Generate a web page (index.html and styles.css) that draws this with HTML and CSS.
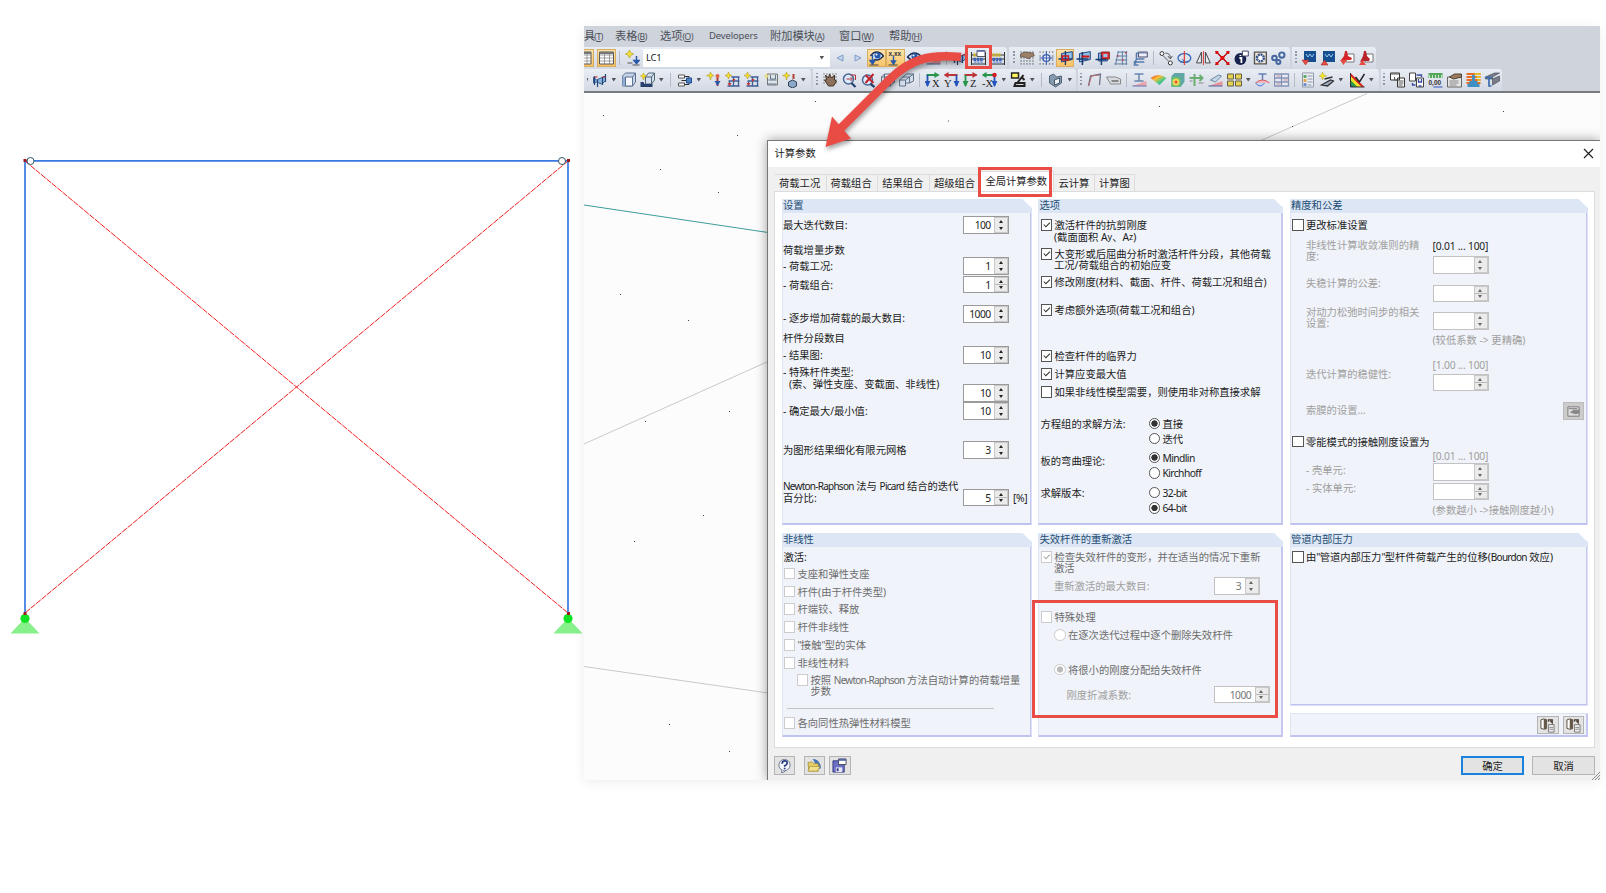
FILE: index.html
```html
<!DOCTYPE html>
<html lang="zh-CN">
<head>
<meta charset="utf-8">
<title>计算参数</title>
<link rel="stylesheet" href="styles.css">
</head>
<body>
<svg class="defs" aria-hidden="true">
  <defs>
    <linearGradient id="rainbow" x2="1" y2="1"><stop offset="0" stop-color="#d33"/><stop offset=".35" stop-color="#fb3"/><stop offset=".65" stop-color="#4c8"/><stop offset="1" stop-color="#36c"/></linearGradient>
    <symbol id="table" viewBox="0 0 16 16"><path d="M1 2h14v12H1z" fill="#fff" stroke="#555"/><path d="M1 5h14M1 8h14M1 11h14M6 3v11M11 3v11" stroke="#888" stroke-width=".8"/><path d="M1 2h14v2H1z" fill="#777"/></symbol>
    <symbol id="load" viewBox="0 0 16 16"><path d="M5 0l1.300 2.700 2.700 1.300-2.700 1.300L5 8 3.700 5.300 1 4l2.700-1.300z" fill="#f5e340" stroke="#a99400" stroke-width=".6"/><path d="M12 6v7M9.500 10.500l2.500 3 2.500-3z" stroke="#2958a8" stroke-width="1.500" fill="#2958a8"/><path d="M3 13h5M8 15h7" stroke="#555"/></symbol>
    <symbol id="eye" viewBox="0 0 16 16"><path d="M1 7q7-8 14 0-7 7-14 0z" fill="#dce9fb" stroke="#1b2d55" stroke-width="1.500"/><circle cx="8" cy="6.500" r="3" fill="#2459ad"/><circle cx="7" cy="5.500" r="1" fill="#fff"/></symbol>
    <symbol id="eye-load" viewBox="0 0 16 16"><path d="M2 6q6-8 13 0-6 6-9 3" fill="#dce9fb" stroke="#1b2d55" stroke-width="1.500"/><circle cx="9" cy="5.500" r="3" fill="#2459ad"/><circle cx="8" cy="4.500" r="1" fill="#fff"/><path d="M4 5v8M1.500 10.500L4 14l2.500-3.500z" stroke="#2459ad" fill="#2459ad" stroke-width="1.400"/><path d="M1 15h9" stroke="#444"/></symbol>
    <symbol id="xxx" viewBox="0 0 16 16"><text x="1" y="5.500" class="mini">x.xx</text><path d="M6 6v7M4 11l2 3 2-3z" stroke="#2459ad" stroke-width="1.400" fill="#2459ad"/><path d="M1 15h9" stroke="#444"/></symbol>
    <symbol id="abacus" viewBox="0 0 16 16"><path d="M1 2v13M15 2v13M1 5h14M1 9h14M1 14h14" stroke="#333"/><path d="M3 5h9" stroke="#d3b529" stroke-width="3.500" stroke-dasharray="2 1"/><path d="M3 9.500h10" stroke="#3d63b4" stroke-width="3.500" stroke-dasharray="2.500 .8"/><path d="M4 12.500h9" stroke="#7a97cf" stroke-width="2" stroke-dasharray="2 1"/></symbol>
    <symbol id="abacus-form" viewBox="0 0 16 16"><path d="M1 2v13M15 2v13M1 5h14M1 9h14M1 14h14" stroke="#333"/><path d="M3 5h9" stroke="#d3b529" stroke-width="3.500" stroke-dasharray="2 1"/><path d="M3 9.500h10" stroke="#3d63b4" stroke-width="3.500" stroke-dasharray="2.500 .8"/><path d="M4 12.500h9" stroke="#7a97cf" stroke-width="2" stroke-dasharray="2 1"/><path d="M6.500 .5h8v6h-8z" fill="#fff" stroke="#556"/><path d="M6.500 .5h8V2h-8z" fill="#7583b8"/></symbol>
    <symbol id="gridhand" viewBox="0 0 16 16"><path d="M1 2h14M1 5h14M1 8h14M1 11h14M1 14h14" stroke="#333" stroke-dasharray="1.200 1.800"/><path d="M1 4l4-2 9 1 1 3-4 1-1 2-5-2-4 0z" fill="#9b8067" stroke="#4c3b2e" stroke-width=".6"/></symbol>
    <symbol id="snap" viewBox="0 0 16 16"><path d="M1 2h14M1 6h14M1 10h14M1 14h14" stroke="#444" stroke-dasharray="1.200 2"/><circle cx="8" cy="8" r="3.500" fill="#e8eefb" stroke="#3a5daf" stroke-width="1.300"/><path d="M8 1v14M1 8h14" stroke="#3a5daf"/></symbol>
    <symbol id="plane" viewBox="0 0 16 16"><path d="M4 3.500l11-2v8L4 12z" fill="#8fc0e8" stroke="#23467c"/><path d="M8 1v14M1 9h14" stroke="#1a3b73" stroke-width="1.400"/><path d="M5 6h6v4H5z" fill="none" stroke="#d21717" stroke-width="1.500"/></symbol>
    <symbol id="plane-line" viewBox="0 0 16 16"><path d="M4 3.500l11-2v8L4 12z" fill="#8fc0e8" stroke="#23467c"/><path d="M7 2v13M1 9h12" stroke="#1a3b73" stroke-width="1.600"/><path d="M6 6.500h8" stroke="#d21717" stroke-width="2"/></symbol>
    <symbol id="plane-red" viewBox="0 0 16 16"><path d="M4 3h9v8H4z" fill="#8fb7de" stroke="#23467c"/><path d="M7 2h8v7H7z" fill="#e23b3b" stroke="#821717"/><path d="M9 4h4v3H9z" fill="#9cc3e8"/><path d="M7 5v10M1 9.500h11" stroke="#1a3b73" stroke-width="1.500"/></symbol>
    <symbol id="mesh" viewBox="0 0 16 16"><path d="M4 2h10M3 6h11M2 10h12M1 14h13M5 1L2 15M9 1v14M13 1v14" stroke="#5d7da3"/><path d="M4 6h1M9 10h1M12 3h1" stroke="#d33" stroke-width="2"/></symbol>
    <symbol id="axis" viewBox="0 0 16 16"><path d="M6 2h9v5H6z" fill="#eef" stroke="#446"/><path d="M4 3h2M4 3v6h8M4 9l-2 5 2-2 8 0M2 11v4h4" stroke="#5a7cad" stroke-width="1.500" fill="none"/><path d="M6 2h9v1.500H6z" fill="#7482a8"/></symbol>
    <symbol id="copy" viewBox="0 0 16 16"><circle cx="3.500" cy="3.500" r="2" fill="#fff" stroke="#333"/><circle cx="12" cy="13" r="2" fill="#fff" stroke="#333"/><path d="M7 3q5 0 5 5M9.500 6l2.500 3 2-3M5 6l5 5" stroke="#555" fill="none"/></symbol>
    <symbol id="rotate" viewBox="0 0 16 16"><ellipse cx="8" cy="8" rx="6.500" ry="4.500" stroke="#3568b5" stroke-width="1.300" fill="none"/><path d="M4 12l4 0-2-3M12 12l-4 0" stroke="#3568b5" fill="none"/><path d="M8 1v14" stroke="#d44" stroke-width="1.300"/></symbol>
    <symbol id="mirror" viewBox="0 0 16 16"><path d="M6 2v11H1zM10 2v11h5z" fill="#e9edf4" stroke="#444"/><path d="M8 1v14" stroke="#d33"/></symbol>
    <symbol id="cross" viewBox="0 0 16 16"><path d="M1 1l14 14M15 1L1 15" stroke="#333" stroke-width="1.300"/><path d="M1 1h3v3H1zM12 1h3v3h-3zM1 12h3v3H1zM12 12h3v3h-3z" fill="#d11"/><path d="M4 4l3 3M12 4L9 7M4 12l3-3M12 12L9 9" stroke="#d11" stroke-width="1.200"/><path d="M6 6h4v4H6z" fill="#d11"/></symbol>
    <symbol id="info" viewBox="0 0 16 16"><circle cx="7" cy="9" r="6" fill="#17224e"/><path d="M6 8h2v5M7 5v1" stroke="#fff" stroke-width="1.800" fill="none"/><path d="M9 1h6v5H9z" fill="#fff" stroke="#446"/></symbol>
    <symbol id="gearbox" viewBox="0 0 16 16"><path d="M2 2h12v12H2z" fill="#f4ead8" stroke="#555" stroke-width="1.400"/><circle cx="8" cy="8" r="3.500" fill="#fff" stroke="#3a568d" stroke-width="2.500" stroke-dasharray="2 .7"/></symbol>
    <symbol id="gears" viewBox="0 0 16 16"><g fill="#dce6f7" stroke="#45659f" stroke-width="2"><circle cx="4" cy="8" r="2.300"/><circle cx="8" cy="12" r="2"/><circle cx="11.500" cy="5" r="2.700"/></g></symbol>
    <symbol id="pic-down" viewBox="0 0 16 16"><path d="M3 1h12v11H3z" fill="#164f90"/><path d="M5 4l2 3 2-3 2 3 2-3" stroke="#9bc8ef" fill="none"/><path d="M1 10h7l-3.500 5z" fill="#e44b43" stroke="#a32720" stroke-width=".5"/></symbol>
    <symbol id="pic-up" viewBox="0 0 16 16"><path d="M3 1h12v11H3z" fill="#164f90"/><path d="M5 4l2 3 2-3 2 3 2-3" stroke="#9bc8ef" fill="none"/><path d="M1 15h7l-3.500-5z" fill="#e44b43" stroke="#a32720" stroke-width=".5"/></symbol>
    <symbol id="pdf-down" viewBox="0 0 16 16"><path d="M7 4h8v8H7z" fill="#fff" stroke="#777"/><path d="M6 1l2 0 1 5 4 2-1 2-5 0-3 3-2-3 3-4z" fill="#d3262b"/><path d="M1 10h7l-3.500 5z" fill="#e44b43"/></symbol>
    <symbol id="pdf-up" viewBox="0 0 16 16"><path d="M7 4h8v8H7z" fill="#fff" stroke="#777"/><path d="M6 1l2 0 1 5 3 3-1 2-5 0-4 1 3-6z" fill="#b8242a"/><path d="M1 15h7l-3.500-5z" fill="#e44b43"/></symbol>
    <symbol id="frame" viewBox="0 0 16 16"><path d="M2 5l3 3 9-4v5l-4 3-5-2-3 1z" fill="#8db4dc" stroke="#345d92"/><path d="M3 4v9M6 8v7M11 5v8M14 2v8" stroke="#23467c" stroke-width="1.200"/><path d="M3 5h3M11 5h3" stroke="#c22"/></symbol>
    <symbol id="cube" viewBox="0 0 16 16"><path d="M2 4l3-3h10v9l-3 4H2z" fill="#c6d5e9" stroke="#5d7391"/><path d="M2 5h3v9H2z" fill="#8faed2"/><path d="M5 5h7v9H5zM12 5l3-4" stroke="#5d7391" fill="#f4f7fb"/></symbol>
    <symbol id="wire" viewBox="0 0 16 16"><path d="M2 5h9v9H2zM5 2h10v8l-4 4M2 5l3-3M11 5l4-3M5 2v8h10" fill="none" stroke="#5e6e86"/></symbol>
    <symbol id="wires" viewBox="0 0 16 16"><path d="M1 8h6v6H1zM4 5h7v6H7M8 2h7v7l-4 2M1 8l7-6M7 8l8-6" fill="#d3deed" stroke="#61728b"/></symbol>
    <symbol id="opencube" viewBox="0 0 16 16"><path d="M6 5l3-4h6v7l-3 4H6z" fill="#d6e2f1" stroke="#567"/><path d="M6 5h6v7M12 5l3-4" fill="none" stroke="#567"/><path d="M1 10h3l1 2h8v3H1z" fill="#263f6d"/><path d="M4 1l1 2 2 1-2 1-1 3-1-3-2-1 2-1z" fill="#f7df2e" stroke="#a69017" stroke-width=".5"/></symbol>
    <symbol id="tree" viewBox="0 0 16 16"><path d="M2 3h6v3H2zM2 11h6v3H2z" fill="#fff" stroke="#555"/><path d="M8 4.500h4.500V8M8 12.500h4.500V8M5 8.500h5" stroke="#333" fill="none"/><path d="M10 6h5v5h-5z" fill="#4d80c4" stroke="#234f90"/></symbol>
    <symbol id="bridge" viewBox="0 0 16 16"><path d="M4 0l1 2.500 2.500 1L5 4.500 4 7 3 4.500 .5 3.500 3 2.500z" fill="#f7df2e" stroke="#a69017" stroke-width=".5"/><path d="M7 5h8M4 9h11M5 9v5M9 5v9M14 5v9M3 14h12" stroke="#3f5e94" stroke-width="1.300"/><path d="M3 11l2 3 2-3M8 7l1 3 2-3" fill="#c33"/></symbol>
    <symbol id="arrow-red" viewBox="0 0 16 16"><path d="M5 0l1 2.500 2.500 1L6 4.500 5 8 4 4.500 1 3.500 4 2.500z" fill="#f7df2e" stroke="#a69017" stroke-width=".5"/><path d="M12 4v10" stroke="#b34132" stroke-width="2"/><path d="M9 9h6l-3 5z" fill="#2958a8"/><circle cx="12" cy="4" r="2" fill="#d86447"/></symbol>
    <symbol id="disk" viewBox="0 0 16 16"><path d="M5 2h10v11H5z" fill="#dce5e9" stroke="#777"/><path d="M6 8h8M8 3v4h5V3M5 12h9" stroke="#678" fill="none"/><path d="M4 1l1 2 2 1-2 1-1 3-1-3-2-1 2-1z" fill="#e5de88"/></symbol>
    <symbol id="loadbox" viewBox="0 0 16 16"><path d="M5 0l1 2.500 2.500 1L6 4.500 5 8 4 4.500 1 3.500 4 2.500z" fill="#f7df2e" stroke="#a69017" stroke-width=".5"/><path d="M12 2v5" stroke="#b34132" stroke-width="2"/><path d="M7 10l4-2 4 2v4l-4 2-4-2z" fill="#8aa9ca" stroke="#345"/></symbol>
    <symbol id="hand" viewBox="0 0 16 16"><path d="M1 2h14M1 5h14M1 8h14M1 11h14" stroke="#333" stroke-dasharray="1 2"/><path d="M3 3l3 3 1-4 2 4 3-3 0 5 2 1-3 5H6L2 8l2 0z" fill="#8d705b" stroke="#443426"/></symbol>
    <symbol id="zoom" viewBox="0 0 16 16"><circle cx="7" cy="7" r="5" fill="#dceafb" stroke="#496795" stroke-width="1.500"/><path d="M10 11l4 4" stroke="#27416d" stroke-width="2.200"/><path d="M5 7h5M9 5l2 2-2 2M9 3h5v5" stroke="#b2323b" fill="none"/></symbol>
    <symbol id="zoom-x" viewBox="0 0 16 16"><circle cx="7" cy="8" r="5" fill="#dceafb" stroke="#496795" stroke-width="1.500"/><path d="M10 12l4 3" stroke="#27416d" stroke-width="2.200"/><path d="M5 3l8 8M13 2L5 11" stroke="#c3242d" stroke-width="2"/></symbol>
    <symbol id="view" viewBox="0 0 16 16"><path d="M2 3h12" stroke="#25964a" stroke-width="1.800"/><path d="M3 3v11" stroke="#2453ba" stroke-width="1.800"/><path d="M10 0l5 3-5 3z" fill="#25964a"/><path d="M0 9h6l-3 6z" fill="#2453ba"/></symbol>
    <symbol id="view-r" viewBox="0 0 16 16"><path d="M2 3h12" stroke="#be3338" stroke-width="1.800"/><path d="M13 3v11" stroke="#2453ba" stroke-width="1.800"/><path d="M5 0L0 3l5 3z" fill="#be3338"/><path d="M10 9h6l-3 6z" fill="#2453ba"/></symbol>
    <symbol id="view-z" viewBox="0 0 16 16"><path d="M2 3h12" stroke="#be3338" stroke-width="1.800"/><path d="M3 3v11" stroke="#25964a" stroke-width="1.800"/><path d="M10 0l5 3-5 3z" fill="#be3338"/><path d="M0 9h6l-3 6z" fill="#25964a"/></symbol>
    <symbol id="view-n" viewBox="0 0 16 16"><path d="M2 3h12" stroke="#25964a" stroke-width="1.800"/><path d="M13 3v11" stroke="#2453ba" stroke-width="1.800"/><path d="M5 0L0 3l5 3z" fill="#25964a"/><path d="M10 9h6l-3 6z" fill="#2453ba"/><circle cx="13" cy="3" r="2.300" fill="#d21f26"/></symbol>
    <symbol id="lamp" viewBox="0 0 16 16"><path d="M1 1h7v5H1z" fill="#fff25a" stroke="#222" stroke-width="1.500"/><path d="M13 3L6 12M11 5l3 3M4 14h10v-3H5z" stroke="#222" stroke-width="2" fill="#ddd"/></symbol>
    <symbol id="section" viewBox="0 0 16 16"><path d="M2 4l4-2 3 3 5-1v7l-6 4-6-4z" fill="#8399ae" stroke="#536477"/><path d="M7 8l5-2v5l-5 2z" fill="#eff3f7" stroke="#456"/></symbol>
    <symbol id="portal" viewBox="0 0 16 16"><path d="M2 14l2-10 10-2-1 11" stroke="#687385" fill="none" stroke-width="1.300"/><path d="M4 4l9-1M2 14L5 4" stroke="#b76a6e"/></symbol>
    <symbol id="tag" viewBox="0 0 16 16"><path d="M1 5h9l5 2v5H5z" fill="#d8dbe0" stroke="#888"/><path d="M6 8h7v2H6z" fill="#888"/></symbol>
    <symbol id="ibeam" viewBox="0 0 16 16"><path d="M3 2h9M7.500 2v7M3 9h9" stroke="#6886ae" stroke-width="1.500"/><path d="M1 14h14V9z" fill="#eaa3aa"/><path d="M1 14h14" stroke="#6274b5"/></symbol>
    <symbol id="surface" viewBox="0 0 16 16"><path d="M0 6q8-6 16 0l-7 7z" fill="url(#rainbow)"/></symbol>
    <symbol id="solid" viewBox="0 0 16 16"><path d="M2 4l3-3h10v9l-4 5H2z" fill="#61a7a5"/><path d="M2 5h9v10H2z" fill="#67bc76"/><circle cx="6.500" cy="10" r="3.500" fill="#f2da51"/><circle cx="6.500" cy="10" r="1.500" fill="#e54d42"/></symbol>
    <symbol id="plus" viewBox="0 0 16 16"><path d="M6 2v12M1 6h12M11 3l3 3-3 3" stroke="#6bae71" stroke-width="2" fill="none"/><path d="M1 9h3M10 11h5" stroke="#888"/></symbol>
    <symbol id="slope" viewBox="0 0 16 16"><path d="M3 8l8-5 3 1-6 6z" fill="#c7daec" stroke="#6c86a1"/><path d="M1 14h14V9z" fill="#e7959c"/><path d="M1 14h14" stroke="#4d6b9e"/></symbol>
    <symbol id="boxes" viewBox="0 0 16 16"><path d="M1 2h6v5H1zM9 2h6v5H9zM1 9h6v5H1zM9 9h6v5H9z" fill="#e7d255" stroke="#625f43"/></symbol>
    <symbol id="support" viewBox="0 0 16 16"><path d="M4 2h8M8 2v7" stroke="#6583b5" stroke-width="1.500"/><path d="M1 11q7-6 14 0" fill="#efb9bd" stroke="#d45c65"/><path d="M1 11q5 6 9 0" fill="#c6d7f6" stroke="#517ad1"/></symbol>
    <symbol id="blocks" viewBox="0 0 16 16"><path d="M1 2h14v12H1zM1 6h14M1 10h14M8 2v12" fill="#e5eaf5" stroke="#8593b5" stroke-width="1.300"/><path d="M3 4h4M10 8h4M3 12h4" stroke="#c58c97"/></symbol>
    <symbol id="sheet" viewBox="0 0 16 16"><path d="M3 1h11v14H3z" fill="#eef0f4" stroke="#909baa"/><path d="M8 4h5M8 7h5M8 10h5M8 13h4" stroke="#8793a8"/><path d="M4 3h3v3H4z" fill="#5ca66a"/><path d="M4 7h3v3H4z" fill="#e3a34c"/><path d="M4 11h3v3H4z" fill="#748ec9"/></symbol>
    <symbol id="wand" viewBox="0 0 16 16"><path d="M4 0l1 2.500 3 1.500-3 1-1 3-1-3-2.500-1L3 2.500z" fill="#f7e529" stroke="#a69017" stroke-width=".4"/><path d="M6 7l8-2M3 13l9-5 3 1-6 5z" stroke="#333" fill="#9aabc2" stroke-width="1.300"/></symbol>
    <symbol id="palette" viewBox="0 0 16 16"><path d="M1 1v14h14z" fill="#d92525"/><path d="M1 4l11 11H1z" fill="#f2e22c"/><path d="M1 8l7 7H1z" fill="#2a9d43"/><path d="M1 12l3 3H1z" fill="#2449b2"/><path d="M1 1v14h14" stroke="#333" fill="none"/><path d="M6 5l4 5 5-8" stroke="#222" stroke-width="1.500" fill="none"/></symbol>
    <symbol id="pages" viewBox="0 0 16 16"><path d="M1 1h9v7H1zM8 6h7v9H8z" fill="#fff" stroke="#333"/><path d="M1 2h9M9 9h5M9 11h5M9 13h4M5 5v3h3" stroke="#555" fill="none"/></symbol>
    <symbol id="pages-b" viewBox="0 0 16 16"><path d="M1 1h6v8H1zM8 6h7v9H8z" fill="#fff" stroke="#444"/><path d="M8 3h5v2M4 11v2h3M10 7v3h3V7M10 14h3" stroke="#3b4da2" fill="none" stroke-width="1.300"/></symbol>
    <symbol id="ruler" viewBox="0 0 16 16"><path d="M1 1h14v5H1z" fill="#55a75a"/><path d="M2 3v3M5 3v3M8 3v3M11 3v3M14 3v3" stroke="#fff" stroke-width=".7"/><text x="1" y="13" class="mini">0,00</text><path d="M6 15h9" stroke="#3154bb"/></symbol>
    <symbol id="report" viewBox="0 0 16 16"><path d="M1 5h14v10H1z" fill="#e5e5e5" stroke="#666"/><path d="M3 9h9M3 11h9M3 13h7" stroke="#888"/><path d="M3 5l5-3 7 0 0 3-4 1-4 1z" fill="#9a7b60" stroke="#50402f"/></symbol>
    <symbol id="bricks" viewBox="0 0 16 16"><path d="M1 2h14M1 5h14M1 8h14M1 11h14" stroke="#e56e24" stroke-width="2"/><path d="M9 2h6M11 5h4M12 8h3" stroke="#e8bc29" stroke-width="2"/><path d="M8 3v8M4 10.500h8M2 13.500h12" stroke="#3d8fc4" stroke-width="2.800"/></symbol>
    <symbol id="steel" viewBox="0 0 16 16"><path d="M1 5l9-4 5 0-7 4v2l7-3v5l-7 4V7L1 7z" fill="#777e8a" stroke="#48505d" stroke-width=".7"/><path d="M0 5.500h8M4.500 5.500V14H7" stroke="#3b6cae" stroke-width="1.700" fill="none"/></symbol>
    <symbol id="check" viewBox="0 0 11 11"><path d="M2 5.200l2.500 2.600L9.200 3" fill="none" stroke="currentColor" stroke-width="1.200"/></symbol>
    <symbol id="lib" viewBox="0 0 16 16"><path d="M1 2q3-2 6 0v9q-3 2-6 0z" fill="#fff" stroke="#554b40"/><path d="M4 1h3v11l-3 0z" fill="#65594c"/><path d="M9 2h4v3M9 7h6v8H9z" stroke="#777" fill="#eee"/><path d="M9 4V2h4v3l-2-2" stroke="#554b40" stroke-width="1.500" fill="none"/><path d="M10 10h4M10 12h4" stroke="#888"/></symbol>
  </defs>
</svg>

<main class="stage">
  <svg class="model" viewBox="0 0 584 893">
    <path d="M25 617V160.800H568V617" fill="none" stroke="#3a78e0" stroke-width="1.700"/>
    <path d="M25 161L568 613M568 161L25 613" stroke="#f21c1c" stroke-width="1" stroke-dasharray="6 1"/>
    <path d="M25 618l14.500 15.500h-29zM568 618l14.500 15.500h-29z" fill="#86f08a"/>
    <circle cx="25" cy="618.500" r="4.600" fill="#12e224"/><circle cx="568" cy="618.500" r="4.600" fill="#12e224"/>
    <circle cx="30.500" cy="161" r="3.500" fill="#fff" stroke="#356"/><circle cx="562" cy="161" r="3.500" fill="#fff" stroke="#356"/>
    <path d="M23.500 159h3v3h-3zM567 159h3v3h-3zM23.500 612h3v3h-3zM567 612h3v3h-3z" fill="#a01818"/>
  </svg>

  <section class="app">
    <nav class="menu">
      <span>具<small>(<u>T</u>)</small></span><span>表格<small>(<u>B</u>)</small></span><span>选项<small class="wide">(<u>O</u>)</small></span><span class="dev">Developers</span><span>附加模块<small>(<u>A</u>)</small></span><span>窗口<small class="wide">(<u>W</u>)</small></span><span>帮助<small>(<u>H</u>)</small></span>
    </nav>

    <div class="bar">
      <div class="group g1">
        <svg class="ic on cut"><use href="#table" x="-8" width="16" height="16"/></svg><svg class="ic on"><use href="#table"/></svg><i class="sep thin"></i><svg class="ic"><use href="#load"/></svg>
        <div class="combo"><span>LC1</span><b class="dd"></b></div>
        <svg class="ic nav"><path d="M12 5v6L6 8z" fill="#c6d6ec" stroke="#7d9cc8"/></svg><svg class="ic nav"><path d="M6 5v6l6-3z" fill="#c6d6ec" stroke="#7d9cc8"/></svg>
        <svg class="ic on"><use href="#eye-load"/></svg><svg class="ic on"><use href="#xxx"/></svg><svg class="ic"><use href="#eye"/></svg><svg class="ic"><use href="#slope"/></svg><i class="sep thin"></i><svg class="ic"><use href="#frame"/></svg><svg class="ic"><use href="#abacus-form"/></svg><svg class="ic"><use href="#abacus"/></svg>
      </div>
      <div class="group g2">
        <i class="grip"></i><svg class="ic"><use href="#gridhand"/></svg><svg class="ic"><use href="#snap"/></svg><svg class="ic on"><use href="#plane"/></svg><svg class="ic"><use href="#plane-line"/></svg><svg class="ic"><use href="#plane-red"/></svg><svg class="ic"><use href="#mesh"/></svg><svg class="ic"><use href="#axis"/></svg><i class="sep thin"></i><svg class="ic"><use href="#copy"/></svg><svg class="ic"><use href="#rotate"/></svg><svg class="ic"><use href="#mirror"/></svg><svg class="ic"><use href="#cross"/></svg><svg class="ic"><use href="#info"/></svg><svg class="ic"><use href="#gearbox"/></svg><svg class="ic"><use href="#gears"/></svg>
      </div>
      <div class="group g3">
        <i class="grip"></i><svg class="ic"><use href="#pic-down"/></svg><svg class="ic"><use href="#pic-up"/></svg><svg class="ic"><use href="#pdf-down"/></svg><svg class="ic"><use href="#pdf-up"/></svg>
      </div>
    </div>

    <div class="bar">
      <div class="group h1">
        <b class="dd"></b><svg class="ic"><use href="#frame"/></svg><b class="dd"></b><svg class="ic"><use href="#cube"/></svg><svg class="ic"><use href="#opencube"/></svg><b class="dd"></b><i class="sep"></i><svg class="ic"><use href="#tree"/></svg><b class="dd"></b><svg class="ic"><use href="#arrow-red"/></svg><svg class="ic"><use href="#bridge"/></svg><svg class="ic"><use href="#bridge"/></svg><svg class="ic"><use href="#disk"/></svg><svg class="ic"><use href="#loadbox"/></svg><b class="dd"></b>
      </div>
      <div class="group h2">
        <i class="grip"></i><svg class="ic"><use href="#hand"/></svg><svg class="ic"><use href="#zoom"/></svg><svg class="ic"><use href="#zoom-x"/></svg><svg class="ic"><use href="#wire"/></svg><svg class="ic"><use href="#wires"/></svg><i class="sep thin"></i><span class="ax"><svg class="ic"><use href="#view"/></svg><em>X</em></span><span class="ax left"><svg class="ic"><use href="#view-r"/></svg><em>Y</em></span><span class="ax"><svg class="ic"><use href="#view-z"/></svg><em>Z</em></span><span class="ax left"><svg class="ic"><use href="#view-n"/></svg><em>-X</em></span><b class="dd"></b><svg class="ic"><use href="#lamp"/></svg><b class="dd"></b><i class="sep"></i><svg class="ic"><use href="#section"/></svg><b class="dd"></b>
      </div>
      <div class="group h3">
        <i class="grip"></i><svg class="ic"><use href="#portal"/></svg><svg class="ic"><use href="#tag"/></svg><i class="sep thin"></i><svg class="ic"><use href="#ibeam"/></svg><svg class="ic"><use href="#surface"/></svg><svg class="ic"><use href="#solid"/></svg><svg class="ic"><use href="#plus"/></svg><svg class="ic"><use href="#slope"/></svg><svg class="ic"><use href="#boxes"/></svg><b class="dd"></b><svg class="ic"><use href="#support"/></svg><svg class="ic"><use href="#blocks"/></svg><i class="sep thin"></i><svg class="ic"><use href="#sheet"/></svg><svg class="ic"><use href="#wand"/></svg><b class="dd"></b><svg class="ic shift"><use href="#palette"/></svg><b class="dd"></b>
      </div>
      <div class="group h4">
        <i class="grip"></i><svg class="ic"><use href="#pages"/></svg><svg class="ic"><use href="#pages-b"/></svg><svg class="ic"><use href="#ruler"/></svg><svg class="ic"><use href="#report"/></svg><svg class="ic"><use href="#bricks"/></svg><svg class="ic"><use href="#steel"/></svg>
      </div>
    </div>

    <div class="workspace">
      <svg class="lines" viewBox="584 92.500 1016 688">
        <path d="M584 204.500L768 232" stroke="#3f9c9c" fill="none"/>
        <path d="M584 443.500L768 361M584 666L768 692.500M1261 140L1367 93" stroke="#c9c9c9" fill="none"/>
        <path d="M815 101h1M603 115h1M737 135h1M660 169h1M718 192h1M620 294h1M688 320h1M645 421h1M729 411h1M634 541h1M703 515h1M669 724h1M729 751h1M1503 111h1M1292 126h1M948 120.500h1M1159 106h1" stroke="#444" stroke-width="1.200"/>
      </svg>

      <section class="dialog">
        <header class="title"><span>计算参数</span><svg width="11" height="11"><path d="M1 1l9 9M10 1l-9 9" stroke="#222" stroke-width="1.200"/></svg></header>
        <div class="tabs">
          <span class="t1">荷载工况</span><span class="t2">荷载组合</span><span class="t2">结果组合</span><span class="t1">超级组合</span><span class="t3">全局计算参数</span><span class="t4">云计算</span><span class="t5">计算图</span>
        </div>

        <div class="page">
          <div class="col">
            <section class="panel tall">
              <h2>设置</h2>
              <div class="rows p1">
                <div class="row"><label>最大迭代数目:</label><span class="spin">100<i></i></span></div>
                <div class="row"><label>荷载增量步数</label></div>
                <div class="row"><label>- 荷载工况:</label><span class="spin">1<i></i></span></div>
                <div class="row"><label>- 荷载组合:</label><span class="spin">1<i></i></span></div>
                <div class="row"><label class="low">- 逐步增加荷载的最大数目:</label><span class="spin">1000<i></i></span></div>
                <div class="row"><label>杆件分段数目</label></div>
                <div class="row"><label>- 结果图:</label><span class="spin">10<i></i></span></div>
                <div class="row"><label>- 特殊杆件类型:</label></div>
                <div class="row"><label class="in">(索、弹性支座、变截面、非线性)</label></div>
                <div class="row"><label></label><span class="spin">10<i></i></span></div>
                <div class="row"><label>- 确定最大/最小值:</label><span class="spin">10<i></i></span></div>
                <div class="row"><label>为图形结果细化有限元网格</label><span class="spin">3<i></i></span></div>
                <div class="row"><label><q>Newton-Raphson</q> 法与 <q>Picard</q> 结合的迭代</label></div>
                <div class="row"><label>百分比:</label><span class="spin">5<i></i></span><span class="unit">[%]</span></div>
              </div>
            </section>
            <section class="panel short">
              <h2>非线性</h2>
              <div class="rows p4">
                <div class="row">激活:</div>
                <div class="row mute"><b class="cb"></b>支座和弹性支座</div>
                <div class="row mute"><b class="cb"></b>杆件(由于杆件类型)</div>
                <div class="row mute"><b class="cb"></b>杆端铰、释放</div>
                <div class="row mute"><b class="cb"></b>杆件非线性</div>
                <div class="row mute"><b class="cb"></b><span><q>"</q>接触<q>"</q>型的实体</span></div>
                <div class="row mute"><b class="cb"></b>非线性材料</div>
                <div class="row mute sub"><b class="cb"></b><span>按照 <q>Newton-Raphson</q> 方法自动计算的荷载增量</span></div>
                <div class="row mute sub2">步数</div>
                <div class="row"><hr></div>
                <div class="row mute"><b class="cb"></b>各向同性热弹性材料模型</div>
              </div>
            </section>
          </div>

          <div class="col">
            <section class="panel tall">
              <h2>选项</h2>
              <div class="rows p2">
                <div class="row"><b class="cb"><svg><use href="#check"/></svg></b>激活杆件的抗剪刚度</div>
                <div class="row in">(截面面积&nbsp;A<small>y</small>、A<small>z</small>)</div>
                <div class="row"><b class="cb"><svg><use href="#check"/></svg></b>大变形或后屈曲分析时激活杆件分段，其他荷载</div>
                <div class="row in">工况/荷载组合的初始应变</div>
                <div class="row"><b class="cb"><svg><use href="#check"/></svg></b>修改刚度(材料、截面、杆件、荷载工况和组合)</div>
                <div class="row"><b class="cb"><svg><use href="#check"/></svg></b>考虑额外选项(荷载工况和组合)</div>
                <div class="row"><b class="cb"><svg><use href="#check"/></svg></b>检查杆件的临界力</div>
                <div class="row"><b class="cb"><svg><use href="#check"/></svg></b>计算应变最大值</div>
                <div class="row"><b class="cb"></b>如果非线性模型需要，则使用非对称直接求解</div>
                <div class="row"><label>方程组的求解方法:</label><b class="rb sel"></b>直接</div>
                <div class="row"><label></label><b class="rb"></b>迭代</div>
                <div class="row"><label class="low">板的弯曲理论:</label><b class="rb sel"></b><q>Mindlin</q></div>
                <div class="row"><label></label><b class="rb"></b><q>Kirchhoff</q></div>
                <div class="row"><label>求解版本:</label><b class="rb"></b><q>32-bit</q></div>
                <div class="row"><label></label><b class="rb sel"></b><q>64-bit</q></div>
              </div>
            </section>
            <section class="panel short">
              <h2>失效杆件的重新激活</h2>
              <div class="rows p5">
                <div class="row mute"><b class="cb"><svg><use href="#check"/></svg></b>检查失效杆件的变形，并在适当的情况下重新</div>
                <div class="row mute in">激活</div>
                <div class="row off in"><label>重新激活的最大数目:</label><span class="spin">3<i></i></span></div>
                <div class="row mute"><b class="cb"></b>特殊处理</div>
                <div class="row mute in"><b class="rb"></b>在逐次迭代过程中逐个删除失效杆件</div>
                <div class="row mute in"><b class="rb sel"></b>将很小的刚度分配给失效杆件</div>
                <div class="row off in2"><label>刚度折减系数:</label><span class="spin wide">1000<i></i></span></div>
              </div>
            </section>
          </div>

          <div class="col">
            <section class="panel tall">
              <h2>精度和公差</h2>
              <div class="split">
                <div class="rows p3">
                  <div class="row"><b class="cb"></b>更改标准设置</div>
                  <div class="row off in">非线性计算收敛准则的精</div>
                  <div class="row off in">度:</div>
                  <div class="row off in">失稳计算的公差:</div>
                  <div class="row off in">对动力松弛时间步的相关</div>
                  <div class="row off in">设置:</div>
                  <div class="row off in">迭代计算的稳健性:</div>
                  <div class="row off in">索膜的设置…</div>
                  <div class="row"><b class="cb"></b>零能模式的接触刚度设置为</div>
                  <div class="row off in">- 壳单元:</div>
                  <div class="row off in">- 实体单元:</div>
                </div>
                <div class="rows p3r">
                  <div class="row rng">[0.01 ... 100]</div>
                  <div class="row off"><span class="spin"><i></i></span></div>
                  <div class="row off"><span class="spin"><i></i></span></div>
                  <div class="row off"><span class="spin"><i></i></span></div>
                  <div class="row off">(较低系数 -&gt; 更精确)</div>
                  <div class="row off rng">[1.00 ... 100]</div>
                  <div class="row off"><span class="spin"><i></i></span></div>
                  <div class="row off rng">[0.01 ... 100]</div>
                  <div class="row off"><span class="spin"><i></i></span></div>
                  <div class="row off"><span class="spin"><i></i></span></div>
                  <div class="row off">(参数越小 -&gt;接触刚度越小)</div>
                </div>
                <span class="btn dim"><svg viewBox="0 0 16 16"><path d="M2 3h12v10H2z" fill="#ddd" stroke="#777"/><path d="M4 9l4-3 7 0-1 4-4 1z" fill="#888"/><path d="M3 5h9" stroke="#777"/></svg></span>
              </div>
            </section>
            <section class="panel pipe">
              <h2>管道内部压力</h2>
              <div class="rows p6"><div class="row"><b class="cb"></b><span>由<q>"</q>管道内部压力<q>"</q>型杆件荷载产生的位移(<q>Bourdon</q> 效应)</span></div></div>
            </section>
            <section class="panel strip">
              <span class="btn"><svg><use href="#lib"/></svg></span><span class="btn"><svg><use href="#lib"/></svg></span>
            </section>
          </div>
        </div>

        <footer class="foot">
          <span class="btn"><svg viewBox="0 0 16 16"><circle cx="8" cy="7.500" r="6" fill="#f4f6fb" stroke="#66728c"/><path d="M5 13l0 3 4-2" fill="#f4f6fb" stroke="#66728c"/><path d="M5.500 6q0-3 2.700-3t2.600 2.500q0 1.500-2.500 2.800v1M8.200 10.500v1.600" stroke="#273e85" stroke-width="1.900" fill="none"/></svg></span>
          <span class="btn"><svg viewBox="0 0 16 16"><path d="M6 1q8 0 9 10l-3 1z" fill="#4876b4"/><path d="M1 5l4-1 2 2h5v8H2z" fill="#e7cf65" stroke="#97812f" stroke-width=".7"/><path d="M1 14l2-5h11l-3 5z" fill="#f1e089" stroke="#97812f" stroke-width=".6"/></svg></span>
          <span class="btn"><svg viewBox="0 0 16 16"><path d="M1 3h12v12H1z" fill="#6b6fc6" stroke="#33387c"/><path d="M4 10h7v5H4z" fill="#e5e6f4"/><path d="M5 11h2v3H5z" fill="#33387c"/><path d="M7 1h8v6H7z" fill="#fff" stroke="#445"/><path d="M7 1h8v2H7z" fill="#5668a8"/></svg></span>
          <span class="push ok">确定</span><span class="push">取消</span>
        </footer>
        <svg class="resize" width="8" height="8"><path d="M0 8l8-8M3 8l5-5M6 8l2-2" stroke="#888"/></svg>
      </section>
    </div>
  </section>
</main>

<svg class="arrow" viewBox="0 0 1606 893">
  <path d="M961 57C929 54 911 59 890 79C874 95 857 112 841 128" fill="none" stroke="#e94b45" stroke-width="8.500"/>
  <path d="M825.500 147L832 116.500L851 138.500z" fill="#e94b45"/>
</svg>
<div class="mark m-tool"></div>
<div class="mark m-tab"></div>
<div class="mark m-special"></div>
</body>
</html>
```

FILE: styles.css
```css
* { box-sizing: border-box; }
body {
  margin: 0;
  width: 1606px;
  height: 893px;
  overflow: hidden;
  background: #fff;
  color: #1c1c1c;
  font: 10.3px/12px "Noto Sans", "Noto Sans CJK SC", sans-serif;
}
.defs { position: absolute; width: 0; height: 0; }
.mini { font: bold 6.5px "Liberation Sans", sans-serif; fill: #333; }
.stage { display: flex; height: 893px; }
.model { flex: 0 0 584px; height: 893px; }

.app {
  width: 1016px;
  height: 754px;
  margin-top: 26px;
  display: flex;
  flex-direction: column;
  box-shadow: 0 2px 12px rgba(0, 0, 0, .07);
}
.menu {
  display: flex;
  height: 20.5px;
  background: #ced3dc;
  color: #4c5058;
  font-size: 11.2px;
  line-height: 20px;
  white-space: nowrap;
}
.menu span { flex: none; width: 45px; }
.menu span:first-child { width: 31px; letter-spacing: -1px; }
.menu span:nth-child(3) { width: 49px; }
.menu .dev { width: 61px; font-size: 9.5px; letter-spacing: -.15px; }
.menu span:nth-child(5) { width: 69px; }
.menu span:nth-child(6) { width: 50px; }
.menu small { font-size: 8.6px; letter-spacing: -.4px; }

.bar { display: flex; gap: 2px; height: 22.5px; background: #ced3dc; }
.bar + .bar { border-bottom: 2px solid #777a7f; height: 23.5px; }
.group {
  display: flex;
  align-items: center;
  height: 22px;
  border-radius: 0 3px 3px 0;
  background: linear-gradient(#e9edf4, #dce1ea 60%, #d3d9e3);
}
.g1 { width: 423px; }
.g2 { width: 281px; }
.g3 { width: 84px; }
.h1 { width: 227px; }
.h2 { width: 263px; }
.h3 { width: 301px; }
.h4 { width: 121px; }
.ic { flex: none; width: 19px; height: 18px; padding: 1px 1.5px; overflow: hidden; }
.ic.on { border: 1px solid #d9ad60; background: linear-gradient(#fde4ad, #f8c266); padding: 0 .5px; }
.ic.cut { width: 9.5px; margin-right: 3px; padding: 0; border-left: 0; }
.ic.nav { width: 18px; padding: 1px 0; }
.ic.shift { margin-left: 2px; }
.g2 .ic { width: 18.8px; }
.g3 .ic { padding: 1px 1px 1px 0; }
.bar:not(.bar + .bar) .group { padding-top: 1px; }
.sep { flex: none; width: 9px; height: 14px; background: linear-gradient(#b4bac6, #b4bac6) center / 1px 100% no-repeat; }
.sep.thin { width: 7px; }
.grip { flex: none; width: 8px; height: 14px; background: repeating-linear-gradient(#8e96a6 0 1.5px, transparent 1.5px 3.5px) center / 2px 100% no-repeat; }
.g2 .grip { width: 9px; }
.h4 .grip, .h3 .grip { width: 6.5px; }
.dd { flex: none; width: 9.5px; height: 4px; background: #555; background-clip: content-box; padding: 0 2.5px; clip-path: polygon(25% 0, 75% 0, 50% 90%); }
.h1 .dd:first-child { width: 6px; }
.combo { flex: none; display: flex; align-items: center; width: 187px; height: 18px; margin: 0 1px 0 1px; padding-left: 3.5px; background: #fff; font-size: 9.5px; letter-spacing: -.3px; }
.combo span { flex: 1; }
.combo .dd { margin-right: 3px; }
.ax { position: relative; flex: none; width: 19px; height: 18px; }
.ax em { position: absolute; left: 9px; bottom: 0; font: 10.5px/10px "Liberation Serif", serif; color: #222; }
.ax.left em { left: 2px; }

.workspace { position: relative; flex: 1; min-height: 0; background: #fcfcfc; overflow: hidden; }
.lines { display: block; width: 1016px; height: 688px; }

.dialog {
  position: absolute;
  left: 183px;
  top: 47.5px;
  width: 833px;
  height: 640px;
  display: flex;
  flex-direction: column;
  border-left: 1.5px solid #777;
  border-top: 1.5px solid #777;
  background: #f0f0f0;
  box-shadow: 0 0 11px rgba(0, 0, 0, .38);
}
.title { display: flex; justify-content: space-between; align-items: center; height: 26px; padding: 0 6px 2px 6.5px; background: #fff; }
.tabs { display: flex; align-items: flex-end; height: 23.5px; padding-left: 7px; }
.tabs span { flex: none; height: 16.5px; padding: 2px 0 0 4px; border: 1px solid #dcdcdc; border-width: 1px 1px 0 0; line-height: 12px; white-space: nowrap; }
.tabs .t1 { width: 51.5px; }
.tabs .t2 { width: 51.7px; }
.tabs .t3 { width: 73px; height: 19.5px; padding: 3px 0 0 4px; background: #fff; }
.tabs .t4 { width: 40.5px; }
.tabs .t5 { width: 40px; }
.page {
  display: flex;
  gap: 6.5px;
  width: 821px;
  height: 557px;
  margin-left: 5.5px;
  padding: 7.5px 0 0 7px;
  border: 1px solid #dcdcdc;
  background: #fff;
}
.col { display: flex; flex-direction: column; gap: 8px; flex: 0 0 250px; }
.col:nth-child(2) { flex-basis: 245px; }
.col:nth-child(3) { flex-basis: 298px; gap: 0; }
.panel { border: 1px solid #dfe6f3; border-width: 0 2px 2px 1px; border-color: transparent #c5c8f1 #c0c3ef #dfe6f3; background: #f0f3f9; clip-path: polygon(0 0, calc(100% - 9px) 0, 100% 9px, 100% 100%, 0 100%); }
.panel h2 { margin: 0 -2px 0 -1px; height: 13.5px; padding-left: 1.5px; background: #dce6f4; color: #244e75; font-size: 10.3px; font-weight: 400; line-height: 13.5px; }
.tall { height: 326px; }
.short { height: 204px; }
.pipe { height: 172.5px; margin-top: 8px; }
.strip { height: 24.5px; margin-top: 7px; display: flex; justify-content: flex-end; gap: 4px; padding: 2.5px 1.5px 0 0; border-top: 1px solid #dfe6f3; clip-path: none; }

.rows { display: grid; padding-left: 1.5px; }
.row { display: flex; align-items: center; height: 18px; white-space: nowrap; line-height: 12px; }
.row label { flex: none; }
.row.mute { color: #6d6d6d; }
.row.off { color: #a0a0a0; }
.row q { quotes: none; letter-spacing: -.45px; }
.row q::before, .row q::after { content: none; }
.row small { font-size: 9px; }
.p1 { padding: 3.5px 0 0 .5px; grid-template-rows: 24.5px 16.5px 18.5px 29.5px 24px 17px 17px 11.5px 9.5px 18px 39px 36px 11.5px 18px; }
.p1 label { width: 180px; }
.p1 .low { padding-top: 8px; }
.p1 .in { padding-left: 6px; }
.p1 q, .p4 q, .p6 q { font-size: 10px; letter-spacing: -.75px; }
.unit { margin-left: 4px; letter-spacing: -.3px; }
.p2 { grid-template-rows: 12px 17px 11px 17px 28px 46px 18px 18px 31.5px 15px 19px 15.5px 19.5px 15.5px 18px; padding-top: 3.5px; }
.p2 .in, .p5 .in { padding-left: 13.5px; }
.p2 label { width: 108px; }
.p2 .low { padding-top: 6px; }
.p2 q { letter-spacing: -.6px; }
.split { display: flex; }
.p3 { width: 142px; padding-top: 3.5px; grid-template-rows: 19.5px 11px 27.5px 28.5px 11px 51px 36px 32px 28px 18px 18px; }
.p3 .in { padding-left: 14px; }
.p3r { width: 130px; padding: 24.5px 0 0; grid-template-rows: 19px 28.5px 27.5px 19px 25px 17.5px 73.5px 16px 19.5px 18.5px 18px; }
.rng { letter-spacing: -.2px; }
.split .btn { margin: 189.5px 0 0 0; }
.p4 { padding: 1.5px 0 0 1px; grid-template-rows: 16.5px 18px 17.5px 18px 18px 18px 17px 11px 17px 15px 18px; }
.p4 .row:first-child { padding-left: 0; }
.p4 .sub { padding-left: 13px; }
.p4 .sub2 { padding-left: 27px; }
.p4 hr { width: 207px; margin: 0 0 0 3px; border: 0; border-top: 1.5px solid #c4c4c4; }
.p5 { padding-top: 1.5px; grid-template-rows: 11px 18px 31px 18px 34.5px 25px 18px; }
.p5 .in label { width: 159.5px; }
.p5 .in2 { padding-left: 26px; }
.p5 .in2 label { width: 147px; }
.p6 { padding-top: 1.5px; }

.cb { flex: none; width: 11.5px; height: 11.5px; margin-right: 2.5px; border: 1px solid #555; background: #fff; display: flex; }
.cb svg { width: 9.5px; height: 9.5px; color: #333; }
.mute .cb { border-color: #ccc; }
.mute .cb svg { color: #aaa; }
.rb { flex: none; width: 11.5px; height: 11.5px; margin-right: 2.5px; border: 1px solid #555; border-radius: 50%; background: #fff; }
.rb.sel { background: radial-gradient(circle, #333 0 2.9px, #fff 3.4px); }
.mute .rb { border-color: #ccc; }
.mute .rb.sel { background: radial-gradient(circle, #bbb 0 2.9px, #fff 3.4px); }

.spin { flex: none; display: flex; justify-content: flex-end; align-items: center; width: 46px; height: 17.5px; border: 1px solid #9a9a9a; background: #fff; letter-spacing: -.6px; color: #222; }
.spin i { position: relative; width: 14px; height: 15.5px; margin-left: 3.5px; border: 1px solid #c8c8c8; background: linear-gradient(#ebebeb 47%, #b9b9b9 47% 53%, #ebebeb 53%); }
.spin i::before, .spin i::after { content: ""; position: absolute; left: 3.5px; border: 2.5px solid transparent; }
.spin i::before { top: 0; border-top: 0; border-bottom: 3px solid #222; margin-top: 2px; }
.spin i::after { bottom: 2px; border-bottom: 0; border-top: 3px solid #222; }
.spin.wide, .p3r .spin { width: 56px; }
.off .spin { border-color: #c2c2c2; color: #777; }
.off .spin i::before { border-bottom-color: #666; }
.off .spin i::after { border-top-color: #666; }

.btn { flex: none; display: flex; align-items: center; justify-content: center; width: 21.5px; height: 18px; border: 1px solid #b4b4b4; background: #e3e3e3; }
.btn svg { width: 15px; height: 15px; }
.btn.dim { background: #ccc; border-color: #bbb; }
.foot { display: flex; padding: 8.5px 5px 0 5.5px; }
.foot .btn { height: 18.5px; margin-right: 4px; }
.foot .btn:first-child { margin-right: 8.5px; }
.push { display: flex; align-items: center; justify-content: center; width: 63px; height: 18.5px; margin-left: 8px; padding-top: 1px; border: 1px solid #b5b5b5; background: #e3e3e3; }
.push.ok { margin-left: auto; border: 2px solid #1a82dc; }
.resize { position: absolute; right: 0; bottom: 0; }

.arrow { position: absolute; left: 0; top: 0; width: 1606px; height: 893px; pointer-events: none; filter: drop-shadow(1px 3px 2px rgba(0, 0, 0, .35)); }
.mark { position: absolute; border: 3px solid #e94b45; }
.m-tool { left: 965px; top: 45px; width: 27px; height: 24px; }
.m-tab { left: 978px; top: 167px; width: 74px; height: 30px; }
.m-special { left: 1032px; top: 600px; width: 246px; height: 118px; }
```
